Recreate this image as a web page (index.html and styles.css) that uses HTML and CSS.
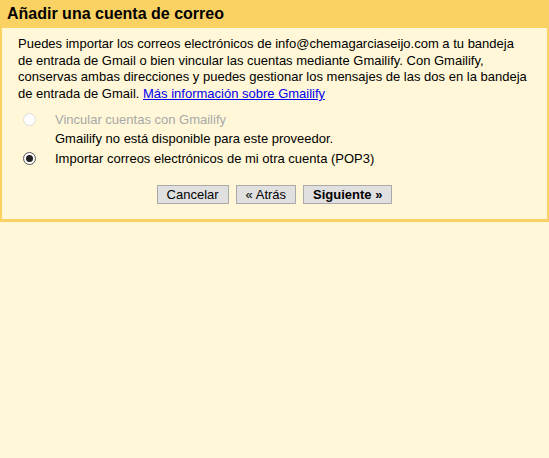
FILE: index.html
```html
<!DOCTYPE html>
<html lang="es">
<head>
<meta charset="utf-8">
<title>Añadir una cuenta de correo</title>
<link rel="stylesheet" href="styles.css">
</head>
<body>
<div class="dialog">
  <div class="header">Añadir una cuenta de correo</div>
  <div class="content">
    <p class="intro">Puedes importar los correos electrónicos de info@chemagarciaseijo.com a tu bandeja de entrada de Gmail o bien vincular las cuentas mediante Gmailify. Con Gmailify, conservas ambas direcciones y puedes gestionar los mensajes de las dos en la bandeja de entrada de Gmail. <a href="#" class="link">Más información sobre Gmailify</a></p>
    <div class="options">
      <div class="option disabled">
        <span class="radio"></span>
        <span class="label">Vincular cuentas con Gmailify</span>
      </div>
      <div class="note">Gmailify no está disponible para este proveedor.</div>
      <div class="option">
        <span class="radio checked"></span>
        <span class="label">Importar correos electrónicos de mi otra cuenta (POP3)</span>
      </div>
    </div>
    <div class="buttons">
      <button class="btn">Cancelar</button>
      <button class="btn">« Atrás</button>
      <button class="btn primary">Siguiente »</button>
    </div>
  </div>
</div>
</body>
</html>
```

FILE: styles.css
```css
html, body {
  margin: 0;
  padding: 0;
  background: #fff7d7;
  font-family: Arial, "Liberation Sans", sans-serif;
  color: #000;
}
.dialog {
  border: 2px solid #fad163;
  border-top: 0;
  border-bottom-width: 3px;
}
.header {
  background: #fad163;
  height: 28px;
  line-height: 28px;
  padding-left: 5px;
  font-size: 16px;
  font-weight: bold;
}
.content {
  padding: 8px 16px 15px 16px;
  font-size: 13px;
}
.intro {
  margin: 0;
  line-height: 16.7px;
}
.link {
  color: #0000ee;
  text-decoration: underline;
}
.options {
  margin-top: 7px;
}
.option {
  display: flex;
  align-items: center;
  height: 19.5px;
}
.radio {
  box-sizing: border-box;
  width: 13px;
  height: 13px;
  border-radius: 50%;
  margin-left: 5px;
  margin-right: 19px;
  background: #fff;
  border: 1px solid #555;
  display: flex;
  align-items: center;
  justify-content: center;
}
.disabled .radio {
  border-color: #dcdcdc;
  background: #fdfdfd;
}
.disabled .label {
  color: #a8a8a8;
}
.radio.checked::after {
  content: "";
  width: 7px;
  height: 7px;
  border-radius: 50%;
  background: #222;
}
.note {
  padding-left: 37px;
  height: 19.5px;
  line-height: 19.5px;
}
.buttons {
  display: flex;
  justify-content: center;
  gap: 7px;
  margin-top: 17px;
}
.btn {
  font-family: Arial, "Liberation Sans", sans-serif;
  font-size: 13px;
  height: 19px;
  padding: 0 9px;
  background: #e0e0e0;
  border: 1px solid #aaaaaa;
  border-radius: 0;
  color: #000;
  line-height: 17px;
}
.btn.primary {
  font-weight: bold;
}
```
